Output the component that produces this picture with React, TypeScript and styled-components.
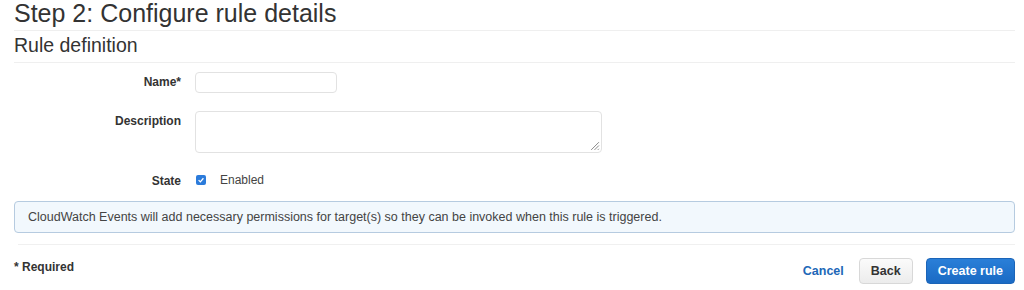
import React from "react";
import styled, { createGlobalStyle } from "styled-components";

const GlobalStyle = createGlobalStyle`
  body {
    margin: 0;
    background: #ffffff;
    font-family: "Liberation Sans", Arial, sans-serif;
    color: #333333;
  }
`;

export default function App() {
  return (
    <>
      <GlobalStyle />
      <Page>
        <Title>Step 2: Configure rule details</Title>
        <SectionTitle>Rule definition</SectionTitle>
        <Form>
          <Label>Name*</Label>
          <TextInput />
          <Label>Description</Label>
          <TextArea>
            <Grip viewBox="0 0 10 10">
              <path d="M9 2 L2 9 M9 5 L5 9 M9 8 L8 9" stroke="#888" strokeWidth="0.9" />
            </Grip>
          </TextArea>
          <Label>State</Label>
          <CheckRow>
            <Check>
              <svg viewBox="0 0 10 10" width="8" height="8">
                <path d="M2 5.2 L4.2 7.3 L8 2.8" stroke="#fff" strokeWidth="1.6" fill="none" />
              </svg>
            </Check>
            <CheckText>Enabled</CheckText>
          </CheckRow>
        </Form>
        <InfoBox>
          CloudWatch Events will add necessary permissions for target(s) so they can be invoked when this
          rule is triggered.
        </InfoBox>
        <Footer>
          <Required>* Required</Required>
          <Actions>
            <LinkButton>Cancel</LinkButton>
            <Button>Back</Button>
            <Button $primary>Create rule</Button>
          </Actions>
        </Footer>
      </Page>
    </>
  );
}

const Page = styled.div`
  display: flex;
  flex-direction: column;
  padding: 0 9px 0 14px;
  height: 290px;
  box-sizing: border-box;
`;

const Title = styled.h1`
  margin: 0;
  padding: 0 0 4px;
  font-size: 25px;
  font-weight: 400;
  line-height: 26px;
  color: #333333;
  border-bottom: 1px solid #efefef;
`;

const SectionTitle = styled.h2`
  margin: 0;
  padding: 4px 0 6px;
  font-size: 19.5px;
  font-weight: 400;
  line-height: 21px;
  color: #333333;
  border-bottom: 1px solid #efefef;
`;

const Form = styled.div`
  display: grid;
  grid-template-columns: 167px auto;
  column-gap: 14px;
  row-gap: 18px;
  align-items: start;
  padding: 9px 0 0;
`;

const Label = styled.div`
  justify-self: end;
  font-size: 12px;
  font-weight: 700;
  color: #333333;
  line-height: 21px;
`;

const TextInput = styled.div`
  width: 142px;
  height: 21px;
  box-sizing: border-box;
  border: 1px solid #e2e2e2;
  border-radius: 4px;
  background: #fff;
`;

const TextArea = styled.div`
  position: relative;
  width: 407px;
  height: 42px;
  box-sizing: border-box;
  border: 1px solid #e2e2e2;
  border-radius: 4px;
  background: #fff;
`;

const Grip = styled.svg`
  position: absolute;
  right: 1px;
  bottom: 1px;
  width: 11px;
  height: 11px;
`;

const CheckRow = styled.div`
  display: flex;
  align-items: center;
  gap: 14px;
  height: 21px;
  margin-top: -2px;
`;

const Check = styled.span`
  display: inline-flex;
  align-items: center;
  justify-content: center;
  width: 10px;
  height: 10px;
  margin-left: 1px;
  border-radius: 2px;
  background: #2b7bdb;
`;

const CheckText = styled.span`
  font-size: 12px;
  color: #444444;
`;

const InfoBox = styled.div`
  margin-top: 9px;
  height: 32px;
  box-sizing: border-box;
  padding: 0 13px;
  display: flex;
  align-items: center;
  font-size: 12.5px;
  color: #444444;
  background: #f2f8fd;
  border: 1px solid #b6cbe0;
  border-radius: 4px;
`;

const Footer = styled.div`
  display: flex;
  align-items: center;
  justify-content: space-between;
  margin: 11px 0 0 4px;
  padding-top: 13px;
  border-top: 1px solid #f0f0f0;
`;

const Required = styled.div`
  font-size: 12px;
  font-weight: 700;
  color: #333333;
  margin-left: -4px;
  margin-top: -9px;
`;

const Actions = styled.div`
  display: flex;
  align-items: center;
  gap: 13px;
`;

const LinkButton = styled.span`
  font-size: 12.5px;
  font-weight: 700;
  color: #2167b7;
  margin-right: 2px;
`;

const Button = styled.div<{ $primary?: boolean }>`
  height: 26px;
  box-sizing: border-box;
  display: flex;
  align-items: center;
  justify-content: center;
  padding: 0 ${(p) => (p.$primary ? "11px" : "11px")};
  font-size: 12.5px;
  font-weight: 700;
  border-radius: 4px;
  color: ${(p) => (p.$primary ? "#ffffff" : "#333333")};
  background: ${(p) =>
    p.$primary ? "linear-gradient(#2a7fd8, #1a6ac4)" : "linear-gradient(#fbfbfb, #ececec)"};
  border: 1px solid ${(p) => (p.$primary ? "#1b64b8" : "#d8d8d8")};
`;
